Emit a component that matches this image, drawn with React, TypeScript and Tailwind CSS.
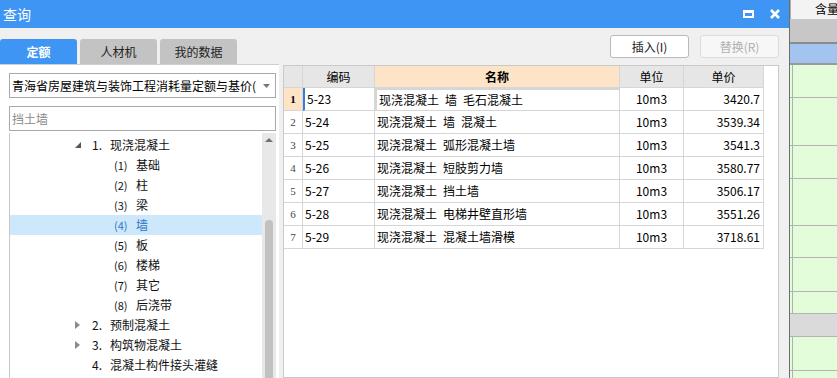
const font = "font-['Noto_Sans_CJK_SC','Noto_Sans',sans-serif]";

type TreeItem = { level: 1 | 2; num: string; label: string; tri?: "open" | "closed"; selected?: boolean };

const tree: TreeItem[] = [
  { level: 1, num: "1.", label: "现浇混凝土", tri: "open" },
  { level: 2, num: "(1)", label: "基础" },
  { level: 2, num: "(2)", label: "柱" },
  { level: 2, num: "(3)", label: "梁" },
  { level: 2, num: "(4)", label: "墙", selected: true },
  { level: 2, num: "(5)", label: "板" },
  { level: 2, num: "(6)", label: "楼梯" },
  { level: 2, num: "(7)", label: "其它" },
  { level: 2, num: "(8)", label: "后浇带" },
  { level: 1, num: "2.", label: "预制混凝土", tri: "closed" },
  { level: 1, num: "3.", label: "构筑物混凝土", tri: "closed" },
  { level: 1, num: "4.", label: "混凝土构件接头灌缝" },
];

// en spaces keep the wide gaps of the original font
const rows = [
  { code: "5-23", name: "现浇混凝土\u2002墙\u2002毛石混凝土", unit: "10m3", price: "3420.7" },
  { code: "5-24", name: "现浇混凝土\u2002墙\u2002混凝土", unit: "10m3", price: "3539.34" },
  { code: "5-25", name: "现浇混凝土\u2002弧形混凝土墙", unit: "10m3", price: "3541.3" },
  { code: "5-26", name: "现浇混凝土\u2002短肢剪力墙", unit: "10m3", price: "3580.77" },
  { code: "5-27", name: "现浇混凝土\u2002挡土墙", unit: "10m3", price: "3506.17" },
  { code: "5-28", name: "现浇混凝土\u2002电梯井壁直形墙", unit: "10m3", price: "3551.26" },
  { code: "5-29", name: "现浇混凝土\u2002混凝土墙滑模", unit: "10m3", price: "3718.61" },
];

function Tree() {
  return (
    <div className="mt-[2px] flex flex-1 border-l border-[#c8c8c8] min-h-0">
      <div className="flex-1 pt-[2px]">
        {tree.map((t) => (
          <div
            key={t.num + t.label}
            className={`flex h-[20px] items-center whitespace-nowrap ${t.selected ? "bg-[#cce8fa] text-[#2f74c8]" : "text-[#111]"}`}
          >
            {t.level === 1 ? (
              <div className="flex items-center pl-[65px]">
                <span className="flex w-[17px] items-center">
                  {t.tri === "open" && (
                    <svg width="6" height="6" viewBox="0 0 6 6">
                      <path d="M6 0 L6 6 L0 6 Z" fill="#555" />
                    </svg>
                  )}
                  {t.tri === "closed" && (
                    <svg width="5" height="8" viewBox="0 0 5 8">
                      <path d="M0 0 L5 4 L0 8 Z" fill="#8a8a8a" />
                    </svg>
                  )}
                </span>
                <span className="w-[18px]">{t.num}</span>
                <span>{t.label}</span>
              </div>
            ) : (
              <div className="flex items-center pl-[104px]">
                <span className="w-[22px] text-[11px]">{t.num}</span>
                <span>{t.label}</span>
              </div>
            )}
          </div>
        ))}
      </div>
      <div className="flex w-[14px] flex-col items-center bg-[#e8e8e8] pt-[5px]">
        <svg width="8" height="4" viewBox="0 0 8 4">
          <path d="M0 4 L4 0 L8 4 Z" fill="#707070" />
        </svg>
        <div className="mt-[78px] w-[8px] flex-1 rounded-t-full bg-[#c1c1c1]" />
      </div>
    </div>
  );
}

function Grid() {
  const cell = "border-r border-b border-[#d6d6d6] flex items-center";
  return (
    <div className="grid grid-cols-[19px_72px_245px_64px_80px] text-[12px]">
      <div className={`${cell} h-[22px] bg-[#e6e6e6]`} />
      <div className={`${cell} h-[22px] justify-center bg-[#e6e6e6]`}>编码</div>
      <div className={`${cell} h-[22px] justify-center bg-[#fde4c7] font-bold`}>名称</div>
      <div className={`${cell} h-[22px] justify-center bg-[#e6e6e6]`}>单位</div>
      <div className={`${cell} h-[22px] justify-center bg-[#e6e6e6]`}>单价</div>
      {rows.map((r, i) => (
        <div key={r.code} className="contents">
          <div
            className={`${cell} h-[23px] justify-center text-[11px] font-['Liberation_Serif',serif] ${i === 0 ? "bg-[#fde4c7] font-bold text-black" : "text-[#444]"}`}
          >
            {i + 1}
          </div>
          <div className={`${cell} h-[23px] pl-[2px] ${i === 0 ? "border-l-2 border-l-[#3b7bd6] pl-0" : ""}`}>{r.code}</div>
          <div className={`${cell} h-[23px] pl-[2px] ${i === 0 ? "border-2 border-[#6e6e6e] pl-[1px]" : ""} whitespace-pre`}>
            {r.name}
          </div>
          <div className={`${cell} h-[23px] justify-center`}>{r.unit}</div>
          <div className={`${cell} h-[23px] justify-end pr-[3px]`}>{r.price}</div>
        </div>
      ))}
    </div>
  );
}

function BackStrip() {
  const greens = [33, 48, 33, 47, 32, 34, 22];
  return (
    <div className={`flex w-[48px] flex-col border-l border-[#6e6e6e] ${font} text-[12px]`}>
      <div className="flex h-[19px] bg-[#f3f3f3]">
        <div className="w-[3px] border-r border-[#b0b0b0]" />
        <div className="pl-[24px] leading-[18px] whitespace-nowrap">含量</div>
      </div>
      <div className="h-[25px] border-b-2 border-[#8c8c8c] bg-[#c7c7c7]" />
      <div className="h-[21px] border-b-2 border-[#9a9a9a] bg-[#a3c4ee]" />
      {greens.map((h, i) => (
        <div key={i} className="flex border-b border-[#b4b4b4] bg-[#e3fcd9]" style={{ height: h }}>
          <div className="w-[3px] border-r border-[#b0b0b0]" />
        </div>
      ))}
      <div className="h-[23px] border-b border-[#b4b4b4] bg-[#dadada]" />
      <div className="flex h-[34px] border-b border-[#b4b4b4] bg-[#e3fcd9]">
        <div className="w-[3px] border-r border-[#b0b0b0]" />
      </div>
      <div className="flex flex-1 bg-[#e3fcd9]">
        <div className="w-[3px] border-r border-[#b0b0b0]" />
      </div>
    </div>
  );
}

export default function App() {
  return (
    <div className={`flex h-[378px] w-[837px] overflow-hidden bg-white ${font} text-[12px] text-black`}>
      {/* dialog */}
      <div className="flex w-[789px] flex-col bg-[#f0f0f0]">
        <div className="flex h-[28px] shrink-0 items-center justify-between bg-[#3e95f4] pl-[3px] pr-[9px] text-white">
          <span className="text-[14px]">查询</span>
          <div className="flex items-center gap-[16px]">
            <div className="h-[8px] w-[11px] border-2 border-t-[3px] border-white" />
            <svg width="10" height="10" viewBox="0 0 10 10">
              <path d="M1 1 L9 9 M9 1 L1 9" stroke="white" strokeWidth="2.6" />
            </svg>
          </div>
        </div>

        <div className="flex flex-1 min-h-0">
          {/* left panel */}
          <div className="flex w-[280px] flex-col">
            <div className="mt-[11px] flex h-[25px] shrink-0 gap-[3px]">
              <div className="flex w-[77px] items-center justify-center rounded-t-[3px] bg-[#3e95f4] font-bold text-white">定额</div>
              <div className="flex w-[77px] items-center justify-center rounded-t-[3px] bg-[#c3c3c3] text-[#222]">人材机</div>
              <div className="flex w-[77px] items-center justify-center rounded-t-[3px] bg-[#c3c3c3] text-[#222]">我的数据</div>
            </div>
            <div className="mr-[1px] flex flex-1 flex-col border-t border-[#cfcfcf] bg-white pl-[9px] pr-[3px] min-h-0">
              <div className="mt-[8px] flex h-[25px] shrink-0 items-center border border-[#a9a9a9] pl-[2px] pr-[5px]">
                <span className="flex-1 overflow-hidden whitespace-nowrap">青海省房屋建筑与装饰工程消耗量定额与基价(</span>
                <svg width="7" height="4" viewBox="0 0 7 4" className="ml-[5px]">
                  <path d="M0 0 L7 0 L3.5 4 Z" fill="#777" />
                </svg>
              </div>
              <div className="mt-[8px] flex h-[25px] shrink-0 items-center border border-[#a9a9a9] pl-[2px] text-[#8a8a8a]">挡土墙</div>
              <Tree />
            </div>
          </div>

          {/* right panel */}
          <div className="flex flex-1 flex-col pl-[3px] pr-[10px]">
            <div className="mt-[7px] flex h-[23px] shrink-0 justify-end gap-[11px]">
              <button className="w-[79px] rounded-[3px] border border-[#b9b9b9] bg-white text-[#222]">插入(I)</button>
              <button className="w-[79px] rounded-[3px] border border-[#dcdcdc] bg-[#f7f7f7] text-[#b0b0b0]">替换(R)</button>
            </div>
            <div className="mt-[7px] flex-1 border border-[#c9c9c9] bg-white">
              <Grid />
            </div>
          </div>
        </div>
      </div>
      <BackStrip />
    </div>
  );
}
